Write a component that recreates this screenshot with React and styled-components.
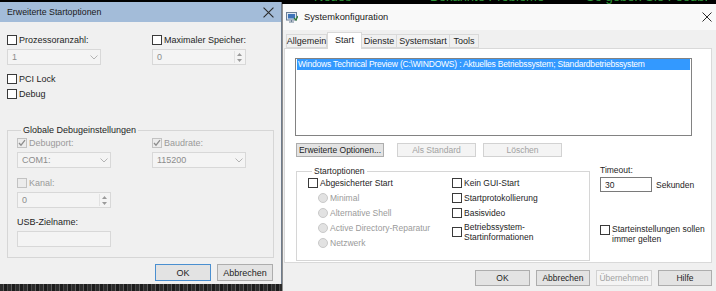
import React from 'react';
import styled, { createGlobalStyle } from 'styled-components';

const GlobalStyle = createGlobalStyle`
  html, body { margin: 0; padding: 0; background: #000; }
  body {
    font-family: "Liberation Sans", Arial, sans-serif;
    font-size: 9px;
    color: #1e1e1e;
  }
`;

const Screen = styled.div`
  width: 716px;
  height: 291px;
  display: flex;
  overflow: hidden;
  background: #000;
`;

/* ---------- left dialog ---------- */

const LeftCol = styled.div`
  width: 282px;
  flex: none;
  display: flex;
  flex-direction: column;
  padding-top: 2px;
`;

const Dialog = styled.div`
  height: 282px;
  background: #f0f0f0;
  border-right: 1px solid #6f7c8c;
  display: flex;
  flex-direction: column;
`;

const DialogTitle = styled.div`
  height: 20px;
  background: #a3bcd9;
  display: flex;
  align-items: center;
  justify-content: space-between;
  padding: 0 7px 0 7px;
  font-size: 8.8px;
  color: #1a1a1a;
`;

const DialogBody = styled.div`
  flex: 1;
  padding: 12px 8px 0 7px;
  display: flex;
  flex-direction: column;
`;

const TwoCols = styled.div`
  display: grid;
  grid-template-columns: ${p => p.$col}px 94px;
  row-gap: 3px;
`;

const CheckRow = styled.div`
  display: flex;
  align-items: ${p => (p.$top ? 'flex-start' : 'center')};
  gap: 2px;
  min-height: 12px;
  color: ${p => (p.$dim ? '#9a9a9a' : '#1e1e1e')};
  margin-top: ${p => p.$mt || 0}px;
  line-height: 10px;
  white-space: nowrap;
`;

const Box = styled.span`
  width: 8px;
  height: 8px;
  flex: none;
  border: 1px solid ${p => (p.$dim ? '#c2c2c2' : '#3a3a3a')};
  background: ${p => (p.$dim ? '#ececec' : '#fff')};
  display: flex;
  align-items: center;
  justify-content: center;
  margin-top: ${p => (p.$top ? '1px' : 0)};
`;

const Field = styled.div`
  height: ${p => p.$h || 16}px;
  box-sizing: border-box;
  border: 1px solid ${p => (p.$active ? '#7a7a7a' : '#d8d8d8')};
  background: ${p => (p.$active ? '#fff' : '#f4f4f4')};
  color: ${p => (p.$active ? '#1e1e1e' : '#8c8c8c')};
  display: flex;
  align-items: center;
  justify-content: space-between;
  padding: 0 2px 0 4px;
  width: ${p => p.$w || 94}px;
  margin-top: ${p => p.$mt || 0}px;
`;

const Arrows = styled.div`
  width: 7px;
  height: 12px;
  border-left: 1px solid #e2e2e2;
  display: flex;
  flex-direction: column;
  align-items: center;
  justify-content: space-around;
  padding-left: 1px;
`;

const Group = styled.fieldset`
  margin: ${p => p.$mt || 0}px 0 0 0;
  padding: ${p => p.$pad};
  border: 1px solid #d6d6d6;
  min-width: 0;
  box-sizing: border-box;
  width: ${p => p.$w}px;
`;

const Legend = styled.legend`
  padding: 0 2px;
  margin-left: 4px;
  line-height: 12px;
  color: #1e1e1e;
`;

const Label = styled.div`
  line-height: 10px;
  margin-top: ${p => p.$mt || 0}px;
  margin-bottom: ${p => p.$mb || 0}px;
  color: #1e1e1e;
`;

const ButtonRow = styled.div`
  display: flex;
  justify-content: flex-end;
  gap: 6px;
  margin-top: ${p => p.$mt || 0}px;
`;

const Button = styled.div`
  width: ${p => p.$w}px;
  height: ${p => p.$h || 17}px;
  flex: none;
  box-sizing: border-box;
  display: flex;
  align-items: center;
  justify-content: center;
  white-space: nowrap;
  border: 1px solid ${p => (p.$default ? '#4a8fd0' : p.$dim ? '#d2d2d2' : '#adadad')};
  background: ${p => (p.$dim ? '#f4f4f4' : '#e3e3e3')};
  color: ${p => (p.$dim ? '#a2a2a2' : '#1e1e1e')};
  margin-left: ${p => p.$ml || 0}px;
`;

const BottomStrip = styled.div`
  flex: 1;
  background:
    repeating-linear-gradient(90deg, #2b2b2b 0 3px, #5a5a5a 3px 4px, #1c1c1c 4px 7px, #474747 7px 8px);
`;

/* ---------- right window ---------- */

const RightCol = styled.div`
  flex: 1;
  min-width: 0;
  display: flex;
  flex-direction: column;
  font-size: 8.5px;
`;

const GreenStrip = styled.div`
  height: 4px;
  overflow: hidden;
  display: flex;
  padding-left: 32px;
  color: #2f9a3a;
  font-size: 13px;
  line-height: 14px;
  white-space: nowrap;
`;

const GreenWord = styled.span`
  width: ${p => p.$w}px;
  flex: none;
  margin-top: -10px;
  margin-right: ${p => p.$gap || 0}px;
  overflow: hidden;
`;

const Window = styled.div`
  flex: 1;
  background: #f0f0f0;
  border-left: 1px solid #8f8f8f;
  display: flex;
  flex-direction: column;
`;

const WinTitle = styled.div`
  height: 26px;
  background: #f9f9f9;
  display: flex;
  align-items: center;
  padding: 0 4px 0 3px;
  font-size: 9.3px;
  color: #1a1a1a;
  gap: 6px;
`;

const TitleText = styled.span`
  flex: 1;
`;

const TabStrip = styled.div`
  display: flex;
  align-items: flex-end;
  height: 17px;
  padding-left: 3px;
  margin-top: 1px;
`;

const Tab = styled.div`
  width: ${p => p.$w}px;
  height: ${p => (p.$on ? 17 : 14)}px;
  box-sizing: border-box;
  border: 1px solid #d9d9d9;
  border-bottom: ${p => (p.$on ? 'none' : '1px solid #d9d9d9')};
  border-left: ${p => (p.$first || p.$on ? '1px solid #d9d9d9' : 'none')};
  background: ${p => (p.$on ? '#fff' : '#f0f0f0')};
  display: flex;
  align-items: center;
  justify-content: center;
  white-space: nowrap;
  padding-bottom: ${p => (p.$on ? 3 : 0)}px;
  position: relative;
  z-index: ${p => (p.$on ? 2 : 1)};
  margin-bottom: ${p => (p.$on ? -1 : 0)}px;
  font-size: 9px;
`;

const Panel = styled.div`
  margin-left: 1px;
  width: 428px;
  height: 215px;
  box-sizing: border-box;
  border: 1px solid #d9d9d9;
  background: #fff;
  padding: 9px 0 0 10px;
  display: flex;
  flex-direction: column;
`;

const ListBox = styled.div`
  width: 397px;
  height: 78px;
  box-sizing: border-box;
  border: 1px solid #828282;
  padding: 0 1px;
`;

const ListItem = styled.div`
  height: 11px;
  line-height: 11px;
  background: #3399ff;
  color: #fff;
  padding-left: 1px;
  white-space: nowrap;
  letter-spacing: -0.2px;
`;

const PanelButtons = styled.div`
  display: flex;
  margin-top: 7px;
  padding-left: 1px;
`;

const Lower = styled.div`
  display: flex;
  margin-top: 8px;
  padding-left: 1px;
`;

const OptionCols = styled.div`
  display: grid;
  grid-template-columns: 144px 1fr;
`;

const Stack = styled.div`
  display: flex;
  flex-direction: column;
  gap: 3px;
`;

const RadioRow = styled.div`
  display: flex;
  align-items: center;
  gap: 2px;
  height: 12px;
  padding-left: 10px;
  color: #9a9a9a;
  white-space: nowrap;
`;

const Radio = styled.span`
  width: 8px;
  height: 8px;
  border-radius: 50%;
  border: 1px solid #c9c9c9;
  background: #e2e2e2;
`;

const SideCol = styled.div`
  margin-left: 10px;
  display: flex;
  flex-direction: column;
`;

const InlineRow = styled.div`
  display: flex;
  align-items: center;
  gap: 4px;
`;

const Spacer = styled.div`
  height: ${p => p.$h}px;
`;

const WinButtons = styled.div`
  display: flex;
  justify-content: flex-end;
  gap: 6px;
  padding-right: 4px;
  margin-top: 7px;
`;

/* ---------- small drawings ---------- */

const CloseX = ({ size = 10 }) => (
  <svg width={size} height={size} viewBox="0 0 10 10">
    <path d="M0.5 0.5 L9.5 9.5 M9.5 0.5 L0.5 9.5" stroke="#2b2b2b" strokeWidth="1" fill="none" />
  </svg>
);

const Tick = () => (
  <svg width="8" height="8" viewBox="0 0 8 8">
    <path d="M1 4 L3 6.2 L7 1.2" stroke="#8d8d8d" strokeWidth="1.3" fill="none" />
  </svg>
);

const Chevron = () => (
  <svg width="8" height="5" viewBox="0 0 8 5">
    <path d="M0.5 0.5 L4 4 L7.5 0.5" stroke="#b4b4b4" strokeWidth="1" fill="none" />
  </svg>
);

const SpinArrows = () => (
  <Arrows>
    <svg width="5" height="3" viewBox="0 0 5 3"><path d="M0 3 L2.5 0 L5 3 Z" fill="#9a9a9a" /></svg>
    <svg width="5" height="3" viewBox="0 0 5 3"><path d="M0 0 L2.5 3 L5 0 Z" fill="#9a9a9a" /></svg>
  </Arrows>
);

const MsIcon = () => (
  <svg width="12" height="11" viewBox="0 0 12 11">
    <rect x="0.5" y="0.5" width="10" height="7.5" fill="#dfe7f0" stroke="#6b7f96" />
    <rect x="2" y="2" width="7" height="4.5" fill="#3f74b8" />
    <path d="M3 10 L8 10 M5.5 8 L5.5 10" stroke="#6b7f96" strokeWidth="1" />
    <path d="M8 6 L10 8 L12 4" stroke="#2c7a2c" strokeWidth="1.2" fill="none" />
  </svg>
);

const Check = ({ label, dim, checked, mt, top }) => (
  <CheckRow $dim={dim} $mt={mt} $top={top}>
    <Box $dim={dim} $top={top}>{checked && <Tick />}</Box>
    <span>{label}</span>
  </CheckRow>
);

const Select = ({ value, w }) => (
  <Field $w={w}>
    <span>{value}</span>
    <Chevron />
  </Field>
);

const Spinner = ({ value, w, mt }) => (
  <Field $w={w} $mt={mt}>
    <span>{value}</span>
    <SpinArrows />
  </Field>
);

export default function App() {
  return (
    <Screen>
      <GlobalStyle />
      <LeftCol>
        <Dialog>
          <DialogTitle>
            <span>Erweiterte Startoptionen</span>
            <CloseX size={11} />
          </DialogTitle>
          <DialogBody>
            <TwoCols $col={145}>
              <Check label="Prozessoranzahl:" />
              <Check label="Maximaler Speicher:" />
              <Select value="1" />
              <Spinner value="0" />
            </TwoCols>
            <Check label="PCI Lock" mt={8} />
            <Check label="Debug" mt={3} />
            <Group $mt={24} $w={267} $pad="1px 0 10px 9px">
              <Legend>Globale Debugeinstellungen</Legend>
              <TwoCols $col={135}>
                <Check label="Debugport:" dim checked />
                <Check label="Baudrate:" dim checked />
                <Select value="COM1:" />
                <Select value="115200" />
              </TwoCols>
              <Check label="Kanal:" dim mt={9} />
              <Spinner value="0" mt={3} />
              <Label $mt={9} $mb={4}>USB-Zielname:</Label>
              <Field $w={94} />
            </Group>
            <ButtonRow $mt={6}>
              <Button $w={56} $default>OK</Button>
              <Button $w={56}>Abbrechen</Button>
            </ButtonRow>
          </DialogBody>
        </Dialog>
        <BottomStrip />
      </LeftCol>

      <RightCol>
        <GreenStrip>
          <GreenWord $w={46} $gap={70}>Neues</GreenWord>
          <GreenWord $w={121} $gap={35}>Bekannte Probleme</GreenWord>
          <GreenWord $w={121}>So geben Sie Feedback</GreenWord>
        </GreenStrip>
        <Window>
          <WinTitle>
            <MsIcon />
            <TitleText>Systemkonfiguration</TitleText>
            <CloseX size={10} />
          </WinTitle>
          <TabStrip>
            <Tab $w={41} $first>Allgemein</Tab>
            <Tab $w={35} $on>Start</Tab>
            <Tab $w={35}>Dienste</Tab>
            <Tab $w={53}>Systemstart</Tab>
            <Tab $w={29}>Tools</Tab>
          </TabStrip>
          <Panel>
            <ListBox>
              <ListItem>
                Windows Technical Preview (C:\WINDOWS) : Aktuelles Betriebssystem; Standardbetriebssystem
              </ListItem>
            </ListBox>
            <PanelButtons>
              <Button $w={88} $h={14}>Erweiterte Optionen...</Button>
              <Button $w={79} $h={14} $dim $ml={13}>Als Standard</Button>
              <Button $w={79} $h={14} $dim $ml={7}>Löschen</Button>
            </PanelButtons>
            <Lower>
              <Group $w={294} $pad="0 0 11px 11px">
                <Legend>Startoptionen</Legend>
                <OptionCols>
                  <Stack>
                    <Check label="Abgesicherter Start" />
                    <RadioRow><Radio />Minimal</RadioRow>
                    <RadioRow><Radio />Alternative Shell</RadioRow>
                    <RadioRow><Radio />Active Directory-Reparatur</RadioRow>
                    <RadioRow><Radio />Netzwerk</RadioRow>
                  </Stack>
                  <Stack>
                    <Check label="Kein GUI-Start" />
                    <Check label="Startprotokollierung" />
                    <Check label="Basisvideo" />
                    <Check label={<>Betriebssystem-<br />Startinformationen</>} />
                  </Stack>
                </OptionCols>
              </Group>
              <SideCol>
                <Label $mb={2}>Timeout:</Label>
                <InlineRow>
                  <Field $w={52} $h={15} $active>30</Field>
                  <span>Sekunden</span>
                </InlineRow>
                <Spacer $h={32} />
                <Check label={<>Starteinstellungen sollen<br />immer gelten</>} top />
              </SideCol>
            </Lower>
          </Panel>
          <WinButtons>
            <Button $w={55} $h={16}>OK</Button>
            <Button $w={54} $h={16}>Abbrechen</Button>
            <Button $w={56} $h={16} $dim>Übernehmen</Button>
            <Button $w={54} $h={16}>Hilfe</Button>
          </WinButtons>
        </Window>
      </RightCol>
    </Screen>
  );
}
